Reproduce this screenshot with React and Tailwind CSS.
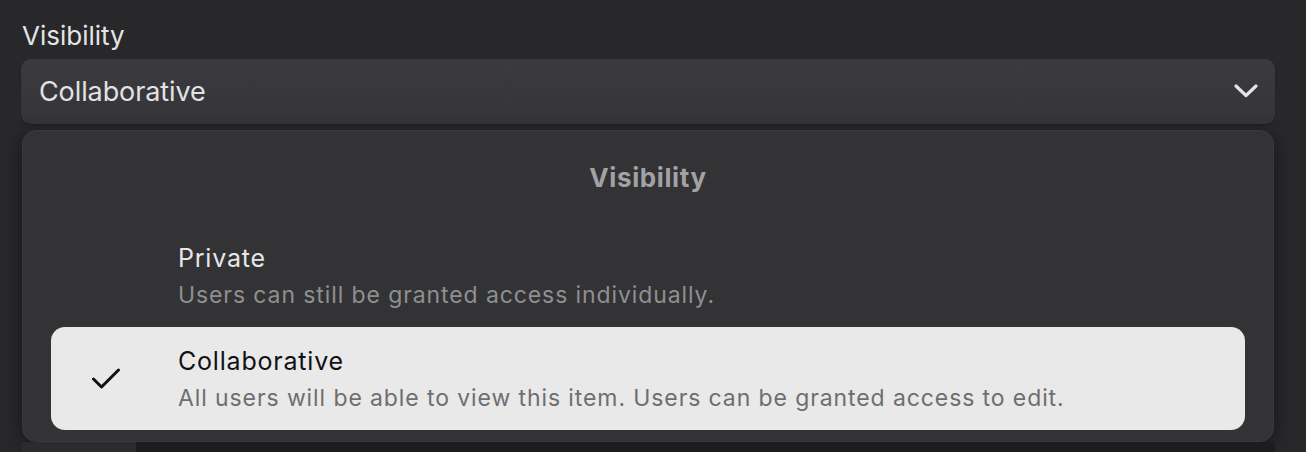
export default function App() {
  const font = { fontFamily: "Inter, 'Noto Sans', sans-serif" };
  return (
    <div className="w-[1306px] h-[452px] overflow-hidden bg-[#28282a] flex flex-col pl-[21px] pr-[31px]" style={font}>
      <div className="pt-[21px] h-[59px] text-[26px] leading-[30px] text-[#e4e4e6] pl-[1px]">Visibility</div>
      <div className="h-[66px] rounded-[10px] bg-gradient-to-b from-[#3b3b3f] to-[#353539] flex items-center justify-between pl-[18px] pr-[17px] shadow-[0_1px_2px_rgba(0,0,0,0.3)]">
        <span className="text-[27px] leading-[32px] tracking-[-0.1px] text-[#e2e2e4] pt-[2px]">Collaborative</span>
        <svg width="24" height="14" viewBox="0 0 24 14" fill="none">
          <path d="M2 2 L12 11.5 L22 2" stroke="#e4e4e6" strokeWidth="3.2" strokeLinecap="round" strokeLinejoin="round" />
        </svg>
      </div>
      <div className="mt-[6px] ml-[1px] mr-[1px] rounded-[14px] bg-[#333335] border border-[#3a3a3c] shadow-[0_4px_18px_rgba(0,0,0,0.45)] flex flex-col pt-[31px] pb-[11px] px-[28px]">
        <div className="h-[30px] text-center text-[26px] leading-[32px] tracking-[0.6px] font-bold text-[#a2a2a4]">Visibility</div>
        <div className="h-[32px]" />
        <div className="h-[103px] flex items-center pl-[127px]">
          <div className="flex flex-col pt-[2px]">
            <span className="text-[25px] leading-[36px] tracking-[0.8px] text-[#e6e6e8]">Private</span>
            <span className="text-[23px] leading-[38px] tracking-[0.9px] text-[#8f8f91]">Users can still be granted access individually.</span>
          </div>
        </div>
        <div className="h-[103px] flex items-center rounded-[14px] bg-[#e9e9e9]">
          <div className="w-[127px] flex items-center pl-[40px]">
            <svg width="30" height="22" viewBox="0 0 30 22" fill="none">
              <path d="M2.5 11 L10.5 19 L27.5 2" stroke="#111" strokeWidth="3" strokeLinecap="round" strokeLinejoin="round" />
            </svg>
          </div>
          <div className="flex flex-col pt-[2px]">
            <span className="text-[25px] leading-[36px] tracking-[0.8px] text-[#111113]">Collaborative</span>
            <span className="text-[23px] leading-[38px] tracking-[0.9px] text-[#6e6e70]">All users will be able to view this item. Users can be granted access to edit.</span>
          </div>
        </div>
      </div>
      <div className="flex h-[10px]">
        <div className="w-[114px] ml-[1px] bg-[#2c2c2e]" />
        <div className="flex-1 bg-[#1d1d1f]" />
      </div>
    </div>
  );
}
